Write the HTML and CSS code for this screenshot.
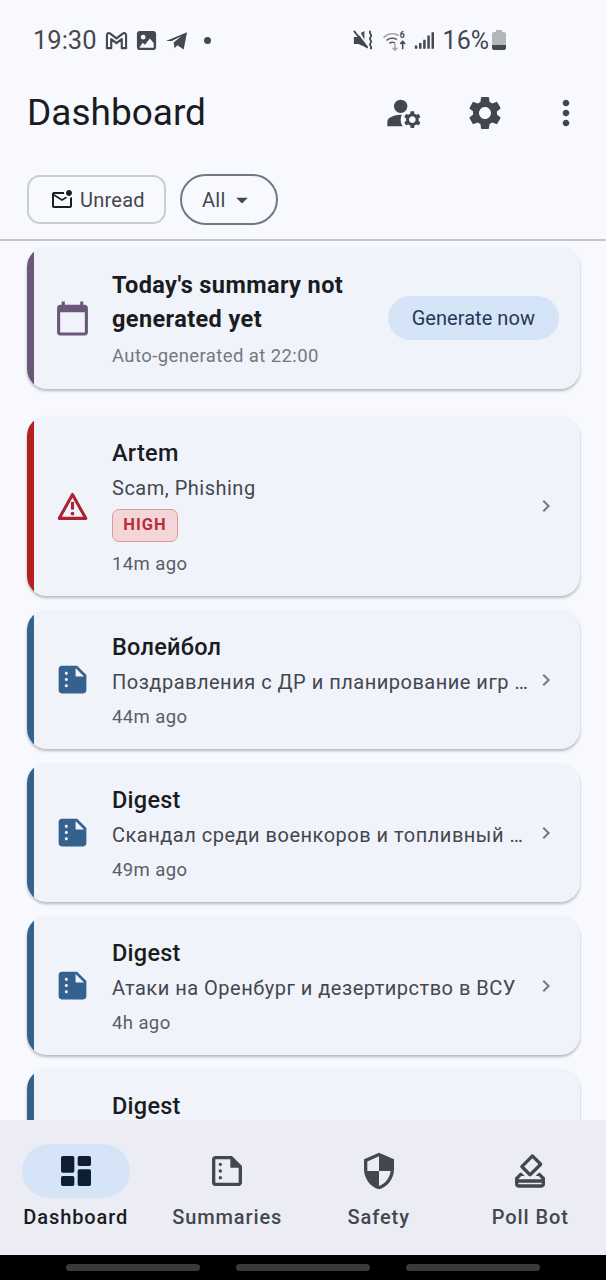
FILE: index.html
```html
<!DOCTYPE html>
<html lang="en">
<head>
    <meta charset="UTF-8">
    <meta name="viewport" content="width=device-width, initial-scale=1.0">
    <title>Dashboard</title>
    <link rel="stylesheet" href="styles.css">
</head>
<body>
    <div class="phone">
        <div class="status">
            <span class="clock">19:30</span>
            <svg class="st-icon" viewBox="0 0 24 24"><path fill="none" stroke="#45484f" stroke-width="2.200" stroke-linejoin="round" d="M2 20V6.500C2 4.500 4 3.500 5.500 4.800L12 9.800l6.500-5C20 3.500 22 4.500 22 6.500V20h-4.500V10.500L12 14.800 6.500 10.500V20z"/></svg>
            <svg class="st-icon" viewBox="0 0 24 24"><path fill="#45484f" fill-rule="evenodd" d="M5 2h14c1.700 0 3 1.300 3 3v14c0 1.700-1.300 3-3 3H5c-1.700 0-3-1.300-3-3V5c0-1.700 1.300-3 3-3zm3.500 4a2.500 2.500 0 1 0 0 5 2.500 2.500 0 0 0 0-5zM4.500 19.500h15v-5l-4-4.500-5 6.500-2.500-2.200z"/></svg>
            <svg class="st-icon" viewBox="0 0 24 24"><path fill="#45484f" d="M1 12.500 23 3.500l-3.500 18-6.500-4.500-3 3-1-6 8-6.500-10 5z"/></svg>
            <span class="st-dot"></span>
            <span class="grow"></span>
            <svg class="st-icon mute" viewBox="0 0 24 24"><path fill="#45484f" d="M1 8h4l2-2 10 13v2l-5-2.500L6 16H1zM9 3.500 13 1v10z"/><path fill="none" stroke="#45484f" stroke-width="2" d="M1 1l15 19M20 1c-3 3 3 4 0 7s3 4 0 7 3 3 0 7"/></svg>
            <svg class="st-icon wifi" viewBox="0 0 26 24"><path fill="none" stroke="#a3a5aa" stroke-width="1.600" d="M1 9c5-5 12-5 16-2"/><path fill="none" stroke="#5a5d63" stroke-width="1.600" d="M4 12c3-3 8-3 11-1M7 15c2-1.500 4-1.500 6-.5"/><path fill="none" stroke="#a3a5aa" stroke-width="1.600" d="M13 15v7m-2.500-2.500 2.500 2.500 2.500-2.500"/><path fill="none" stroke="#45484f" stroke-width="1.600" d="M21 13v8m-2.500-5.500L21 13l2.500 2.500"/><text class="wifi-six" x="18" y="9">6</text></svg>
            <svg class="st-icon signal" viewBox="0 0 24 24"><path fill="#45484f" d="M1 18h3v4H1zM6 15h3v7H6zM11 11h3v11h-3zM16 6h3v16h-3zM21 2h3v20h-3z"/></svg>
            <span class="battery-text">16%</span>
            <span class="battery"><span class="battery-cap"></span><span class="battery-body"></span></span>
        </div>

        <div class="appbar">
            <h1>Dashboard</h1>
            <svg class="act act-user" viewBox="0 0 24 24"><circle cx="10" cy="8" r="4"/><path d="M10.670 13.020C10.450 13.010 10.230 13 10 13c-2.420 0-4.680.67-6.610 1.820C2.510 15.340 2 16.320 2 17.350V20h9.260c-.79-1.130-1.260-2.510-1.260-4 0-1.070.25-2.070.67-2.980z"/><path d="M20.750 16c0-.22-.03-.42-.06-.63l1.140-1.010-1-1.730-1.450.49c-.32-.27-.68-.48-1.080-.63L18 11h-2l-.3 1.490c-.4.15-.76.36-1.080.63l-1.450-.49-1 1.730 1.140 1.010c-.03.21-.06.41-.06.63s.03.42.06.63l-1.140 1.010 1 1.730 1.450-.49c.32.27.68.48 1.080.63L16 21h2l.3-1.490c.4-.15.76-.36 1.080-.63l1.450.49 1-1.730-1.140-1.010c.03-.21.06-.41.06-.63zM17 18c-1.100 0-2-.9-2-2s.9-2 2-2 2 .9 2 2-.9 2-2 2z"/></svg>
            <svg class="act act-gear" viewBox="0 0 24 24"><path d="M19.140 12.940c.04-.3.06-.61.06-.94 0-.32-.02-.64-.07-.94l2.030-1.580c.18-.14.23-.41.12-.61l-1.920-3.320c-.12-.22-.37-.29-.59-.22l-2.390.96c-.5-.38-1.030-.7-1.620-.94l-.36-2.540c-.04-.24-.24-.41-.48-.41h-3.840c-.24 0-.43.17-.47.41l-.36 2.540c-.59.24-1.130.57-1.620.94l-2.390-.96c-.22-.08-.47 0-.59.22L2.740 8.870c-.12.21-.08.47.12.61l2.030 1.580c-.05.3-.09.63-.09.94s.02.64.07.94l-2.030 1.580c-.18.14-.23.41-.12.61l1.920 3.320c.12.22.37.29.59.22l2.390-.96c.5.38 1.030.7 1.620.94l.36 2.540c.05.24.24.41.48.41h3.840c.24 0 .44-.17.47-.41l.36-2.540c.59-.24 1.130-.56 1.620-.94l2.390.96c.22.08.47 0 .59-.22l1.920-3.320c.12-.22.07-.47-.12-.61l-2.010-1.580zM12 15.600c-1.980 0-3.600-1.620-3.600-3.600s1.620-3.600 3.600-3.600 3.600 1.620 3.600 3.600-1.620 3.600-3.600 3.600z"/></svg>
            <svg class="act act-more" viewBox="0 0 24 24"><path d="M12 8c1.100 0 2-.9 2-2s-.9-2-2-2-2 .9-2 2 .9 2 2 2zm0 2c-1.100 0-2 .9-2 2s.9 2 2 2 2-.9 2-2-.9-2-2-2zm0 6c-1.100 0-2 .9-2 2s.9 2 2 2 2-.9 2-2-.9-2-2-2z"/></svg>
        </div>

        <div class="filters">
            <div class="chip chip-square">
                <svg class="chip-icon" viewBox="0 0 24 24"><path d="M22 8.980V18c0 1.100-.9 2-2 2H4c-1.100 0-2-.9-2-2V6c0-1.100.9-2 2-2h10.100c-.06.32-.1.66-.1 1s.04.68.1 1H4l8 5 3.670-2.290c.47.43 1.020.76 1.630.98L12 13 4 8v10h16V9.900c.74-.15 1.420-.48 2-.92zM16 5c0 1.660 1.340 3 3 3s3-1.340 3-3-1.340-3-3-3-3 1.340-3 3z"/></svg>
                <span>Unread</span>
            </div>
            <div class="chip chip-round">
                <span>All</span>
                <svg class="chip-caret" viewBox="0 0 24 24"><path d="M7 10l5 5 5-5z"/></svg>
            </div>
        </div>

        <div class="list">
            <div class="card card-summary">
                <div class="strip strip-purple"></div>
                <svg class="card-icon ic-purple" viewBox="0 0 24 24"><path d="M20 3h-1V1h-2v2H7V1H5v2H4c-1.100 0-2 .9-2 2v16c0 1.100.9 2 2 2h16c1.100 0 2-.9 2-2V5c0-1.100-.9-2-2-2zm0 18H4V8h16v13z"/></svg>
                <div class="card-text">
                    <div class="summary-title">Today's summary not generated yet</div>
                    <div class="meta meta-light">Auto-generated at 22:00</div>
                </div>
                <div class="gen-btn">Generate now</div>
            </div>

            <div class="card card-alert">
                <div class="strip strip-red"></div>
                <svg class="card-icon" viewBox="0 0 24 24"><path class="warn-line" d="M12 4.200 20.600 19.700H3.400z"/><rect class="warn-mark" x="11" y="9" width="2" height="5"/><circle class="warn-mark" cx="12" cy="16.600" r="1.200"/></svg>
                <div class="card-text">
                    <div class="name">Artem</div>
                    <div class="desc">Scam, Phishing</div>
                    <div class="badge">HIGH</div>
                    <div class="meta">14m ago</div>
                </div>
                <svg class="chevron" viewBox="0 0 24 24"><path d="M10 6 8.590 7.410 13.170 12l-4.580 4.590L10 18l6-6z"/></svg>
            </div>

            <div class="card">
                <div class="strip strip-blue"></div>
                <svg class="card-icon ic-blue" viewBox="0 0 24 24"><path d="M15 3H5c-1.100 0-2 .9-2 2v14c0 1.100.9 2 2 2h14c1.100 0 2-.9 2-2V9l-6-6zM8 17c-.55 0-1-.45-1-1s.45-1 1-1 1 .45 1 1-.45 1-1 1zm0-4c-.55 0-1-.45-1-1s.45-1 1-1 1 .45 1 1-.45 1-1 1zm0-4c-.55 0-1-.45-1-1s.45-1 1-1 1 .45 1 1-.45 1-1 1zm6 1V4.500l5.500 5.500H14z"/></svg>
                <div class="card-text">
                    <div class="name">Волейбол</div>
                    <div class="desc">Поздравления с ДР и планирование игр …</div>
                    <div class="meta">44m ago</div>
                </div>
                <svg class="chevron" viewBox="0 0 24 24"><path d="M10 6 8.590 7.410 13.170 12l-4.580 4.590L10 18l6-6z"/></svg>
            </div>

            <div class="card">
                <div class="strip strip-blue"></div>
                <svg class="card-icon ic-blue" viewBox="0 0 24 24"><path d="M15 3H5c-1.100 0-2 .9-2 2v14c0 1.100.9 2 2 2h14c1.100 0 2-.9 2-2V9l-6-6zM8 17c-.55 0-1-.45-1-1s.45-1 1-1 1 .45 1 1-.45 1-1 1zm0-4c-.55 0-1-.45-1-1s.45-1 1-1 1 .45 1 1-.45 1-1 1zm0-4c-.55 0-1-.45-1-1s.45-1 1-1 1 .45 1 1-.45 1-1 1zm6 1V4.500l5.500 5.500H14z"/></svg>
                <div class="card-text">
                    <div class="name">Digest</div>
                    <div class="desc">Скандал среди военкоров и топливный …</div>
                    <div class="meta">49m ago</div>
                </div>
                <svg class="chevron" viewBox="0 0 24 24"><path d="M10 6 8.590 7.410 13.170 12l-4.580 4.590L10 18l6-6z"/></svg>
            </div>

            <div class="card">
                <div class="strip strip-blue"></div>
                <svg class="card-icon ic-blue" viewBox="0 0 24 24"><path d="M15 3H5c-1.100 0-2 .9-2 2v14c0 1.100.9 2 2 2h14c1.100 0 2-.9 2-2V9l-6-6zM8 17c-.55 0-1-.45-1-1s.45-1 1-1 1 .45 1 1-.45 1-1 1zm0-4c-.55 0-1-.45-1-1s.45-1 1-1 1 .45 1 1-.45 1-1 1zm0-4c-.55 0-1-.45-1-1s.45-1 1-1 1 .45 1 1-.45 1-1 1zm6 1V4.500l5.500 5.500H14z"/></svg>
                <div class="card-text">
                    <div class="name">Digest</div>
                    <div class="desc">Атаки на Оренбург и дезертирство в ВСУ</div>
                    <div class="meta">4h ago</div>
                </div>
                <svg class="chevron" viewBox="0 0 24 24"><path d="M10 6 8.590 7.410 13.170 12l-4.580 4.590L10 18l6-6z"/></svg>
            </div>

            <div class="card card-cut">
                <div class="strip strip-blue"></div>
                <div class="card-text card-text-cut">
                    <div class="name">Digest</div>
                </div>
            </div>
        </div>

        <div class="nav">
            <div class="nav-item nav-active">
                <div class="nav-pill">
                    <svg viewBox="0 0 24 24"><rect x="3" y="3" width="8" height="10" rx="1"/><rect x="3" y="15" width="8" height="6" rx="1"/><rect x="13" y="3" width="8" height="6" rx="1"/><rect x="13" y="11" width="8" height="10" rx="1"/></svg>
                </div>
                <div class="nav-label">Dashboard</div>
            </div>
            <div class="nav-item">
                <div class="nav-pill">
                    <svg viewBox="0 0 24 24"><path d="M15 3H5c-1.100 0-2 .9-2 2v14c0 1.100.9 2 2 2h14c1.100 0 2-.9 2-2V9l-6-6zM5 19V5h9v5h5v9H5zM9 8c0 .55-.45 1-1 1s-1-.45-1-1 .45-1 1-1 1 .45 1 1zm0 4c0 .55-.45 1-1 1s-1-.45-1-1 .45-1 1-1 1 .45 1 1zm0 4c0 .55-.45 1-1 1s-1-.45-1-1 .45-1 1-1 1 .45 1 1z"/></svg>
                </div>
                <div class="nav-label">Summaries</div>
            </div>
            <div class="nav-item">
                <div class="nav-pill">
                    <svg viewBox="0 0 24 24"><path d="M12 1 3 5v6c0 5.550 3.840 10.740 9 12 5.160-1.260 9-6.450 9-12V5l-9-4zm0 10.990h7c-.53 4.120-3.280 7.790-7 8.940V12H5V6.300l7-3.110v8.800z"/></svg>
                </div>
                <div class="nav-label">Safety</div>
            </div>
            <div class="nav-item">
                <div class="nav-pill">
                    <svg viewBox="0 0 24 24"><path d="M18 13h-.68l-2 2h1.910L19 17H5l1.780-2h2.050l-2-2H6l-3 3v4c0 1.100.89 2 1.990 2H19c1.100 0 2-.89 2-2v-4l-3-3zm1 7H5v-1h14v1zm-7.660-4.980c.39.39 1.020.39 1.410 0l6.360-6.360c.39-.39.39-1.020 0-1.410L14.160 2.300c-.38-.4-1.010-.4-1.400-.01L6.390 8.660c-.39.39-.39 1.020 0 1.410l4.950 4.950zm2.120-10.610L17 7.950l-4.950 4.950-3.540-3.540 4.950-4.950z"/></svg>
                </div>
                <div class="nav-label">Poll Bot</div>
            </div>
        </div>

        <div class="sysbar">
            <span class="sys-pill"></span>
            <span class="sys-pill"></span>
            <span class="sys-pill"></span>
        </div>
    </div>
</body>
</html>
```

FILE: styles.css
```css
* {
    box-sizing: border-box;
}
body {
    margin: 0;
    font-family: Roboto, sans-serif;
    color: #191c20;
    background: #f8f9ff;
}
.phone {
    width: 606px;
    height: 1280px;
    display: flex;
    flex-direction: column;
    overflow: hidden;
}

/* status bar */
.status {
    height: 80px;
    flex: none;
    display: flex;
    align-items: center;
    padding: 0 100px 0 33px;
    color: #45484f;
}
.clock {
    font-size: 25.500px;
    margin-right: 8px;
}
.st-icon {
    width: 23px;
    height: 23px;
    flex: none;
}
.st-icon + .st-icon {
    margin-left: 7px;
}
.st-dot {
    width: 7px;
    height: 7px;
    border-radius: 50%;
    background: #45484f;
    margin-left: 16px;
}
.grow {
    flex: 1;
}
.st-icon.mute {
    width: 21px;
}
.st-icon.wifi {
    width: 26px;
    margin-left: 8px;
}
.wifi-six {
    font-size: 9px;
    font-weight: 700;
    fill: #45484f;
}
.st-icon.signal {
    width: 20px;
    margin-left: 6px;
}
.battery-text {
    font-size: 25px;
    margin-left: 9px;
    margin-right: 3px;
}
.battery {
    width: 14px;
    height: 20px;
    display: flex;
    flex-direction: column;
    align-items: center;
}
.battery-cap {
    width: 6px;
    height: 2px;
    background: #b4b6ba;
}
.battery-body {
    width: 14px;
    height: 18px;
    border-radius: 2px;
    background: linear-gradient(#b4b6ba 75%, #45484f 75%);
}

/* top app bar */
.appbar {
    height: 66px;
    flex: none;
    display: flex;
    align-items: center;
    padding: 0 20px 0 27px;
}
h1 {
    margin: 0 0 2px;
    font-size: 37px;
    font-weight: 400;
    flex: 1;
}
.act {
    fill: #41474f;
    flex: none;
}
.act-user {
    width: 40px;
    height: 40px;
    margin-right: -1px;
}
.act-gear {
    width: 40px;
    height: 40px;
    margin-left: 42px;
}
.act-more {
    width: 40px;
    height: 40px;
    margin-left: 41px;
}

/* filter chips */
.filters {
    height: 95px;
    flex: none;
    display: flex;
    align-items: flex-start;
    gap: 14px;
    padding: 28px 27px 0;
    border-bottom: 2px solid #c4c6cc;
}
.chip {
    display: flex;
    align-items: center;
    font-size: 20px;
    letter-spacing: .25px;
    color: #43474e;
}
.chip-square {
    width: 139px;
    height: 49px;
    margin-top: 1px;
    border: 2px solid #c9ccd2;
    border-radius: 13px;
    padding-left: 21px;
    gap: 6px;
}
.chip-round {
    width: 98px;
    height: 51px;
    border: 2px solid #73777f;
    border-radius: 26px;
    padding-left: 20px;
    gap: 2px;
}
.chip-icon {
    width: 24px;
    height: 24px;
    fill: #191c20;
}
.chip-caret {
    width: 28px;
    height: 28px;
    fill: #43474e;
}

/* list */
.list {
    flex: 1;
    min-height: 0;
    overflow: hidden;
    display: flex;
    flex-direction: column;
    gap: 14px;
    padding: 6px 26px 0 27px;
}
.card {
    flex: none;
    display: flex;
    align-items: center;
    background: #f1f3fb;
    border-radius: 20px;
    overflow: hidden;
    box-shadow: 0 2px 3px rgba(0, 0, 0, .26);
    padding-right: 22px;
}
.card-summary {
    margin-bottom: 13px;
    padding-right: 21px;
}
.strip {
    align-self: stretch;
    width: 7px;
    flex: none;
}
.strip-purple {
    background: #6b5778;
}
.strip-red {
    background: #b3201f;
}
.strip-blue {
    background: #35618f;
}
.card-icon {
    width: 37px;
    height: 37px;
    margin: 0 21px 0 20px;
    flex: none;
}
.ic-purple {
    fill: #6b5778;
}
.ic-blue {
    fill: #35618f;
}
.warn-line {
    fill: none;
    stroke: #ab2430;
    stroke-width: 2;
    stroke-linejoin: round;
}
.warn-mark {
    fill: #ab2430;
}
.card-text {
    flex: 1;
    min-width: 0;
    padding: 20px 0 15px;
}
.card-alert .card-text {
    padding-bottom: 15.500px;
}
.card-summary .card-text {
    padding: 21px 0 16px;
}
.card-text-cut {
    padding-left: 78px;
    min-height: 139px;
}
.summary-title {
    font-size: 23.500px;
    font-weight: 700;
    line-height: 34px;
    letter-spacing: .4px;
    color: #191c20;
    width: 250px;
}
.name {
    font-size: 23.500px;
    font-weight: 500;
    line-height: 35px;
    letter-spacing: .25px;
    color: #191c20;
}
.desc {
    font-size: 20px;
    line-height: 35px;
    letter-spacing: .5px;
    color: #43474e;
    white-space: nowrap;
}
.meta {
    font-size: 18.500px;
    line-height: 34px;
    letter-spacing: .4px;
    color: #5a5e65;
}
.meta-light {
    color: #73777f;
    margin-top: 3px;
}
.badge {
    width: 66px;
    height: 32.500px;
    margin: 3px 0 5px;
    font-size: 16.500px;
    font-weight: 700;
    letter-spacing: 1px;
    line-height: 30px;
    text-align: center;
    color: #b5303a;
    background: #f5d6d8;
    border: 1.500px solid #dd9a9e;
    border-radius: 7px;
}
.chevron {
    width: 24px;
    height: 24px;
    fill: #73777f;
    flex: none;
}
.gen-btn {
    flex: none;
    font-size: 20px;
    letter-spacing: .05px;
    line-height: 44px;
    padding: 0 24px;
    border-radius: 22px;
    background: #d6e4f7;
    color: #1f3a57;
}

/* bottom navigation */
.nav {
    height: 135px;
    flex: none;
    display: grid;
    grid-template-columns: repeat(4, 1fr);
    background: #ecedf4;
    padding-top: 24px;
}
.nav-item {
    display: flex;
    flex-direction: column;
    align-items: center;
}
.nav-pill {
    width: 108px;
    height: 54px;
    border-radius: 27px;
    display: flex;
    align-items: center;
    justify-content: center;
}
.nav-pill svg {
    width: 40px;
    height: 40px;
    fill: #43474e;
}
.nav-active .nav-pill {
    background: #d6e4f7;
}
.nav-active .nav-pill svg {
    fill: #0f1f33;
}
.nav-label {
    margin-top: 7px;
    font-size: 20px;
    font-weight: 500;
    letter-spacing: .9px;
    color: #43474e;
}
.nav-active .nav-label {
    color: #191c20;
}

/* system gesture bar */
.sysbar {
    height: 25px;
    flex: none;
    background: #000;
    display: flex;
    justify-content: center;
    gap: 36px;
    padding-top: 9px;
}
.sys-pill {
    width: 134px;
    height: 7px;
    border-radius: 4px;
    background: #3a3a3a;
}
```
